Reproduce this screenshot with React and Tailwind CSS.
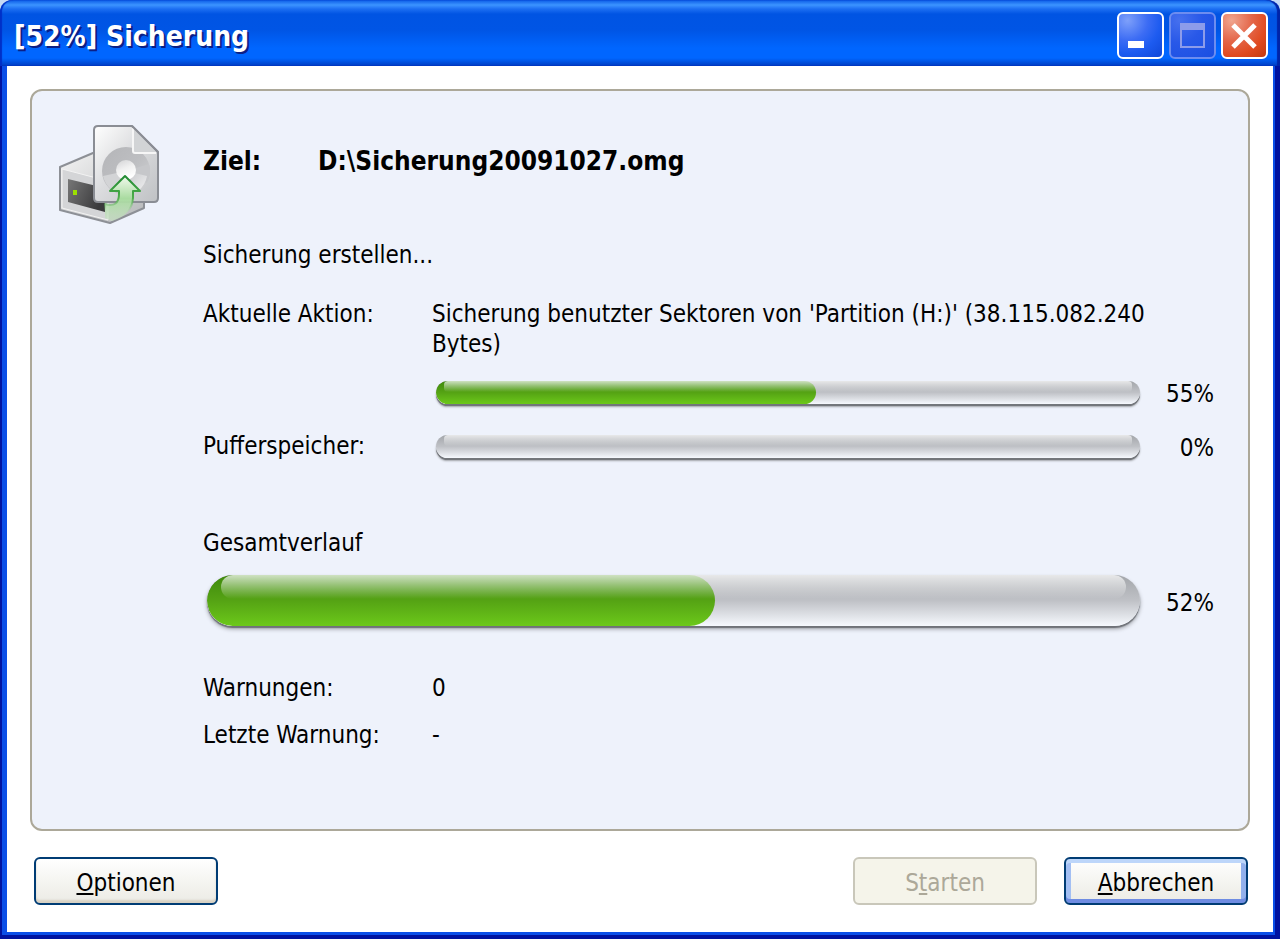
import React from 'react';
import clsx from 'clsx';

const action = {
    label: 'Aktuelle Aktion:',
    text: "Sicherung benutzter Sektoren von 'Partition (H:)' (38.115.082.240 Bytes)",
};

function BackupIcon() {
    return (
        <svg viewBox="18 13 103 103" className="w-[103px] h-[103px]" aria-hidden="true">
            <defs>
                <linearGradient id="drive" x1="0" y1="0" x2="1" y2="1">
                    <stop offset="0" stopColor="#f4f4f4" />
                    <stop offset="1" stopColor="#b4b6b8" />
                </linearGradient>
                <linearGradient id="page" x1="0" y1="0" x2="1" y2="1">
                    <stop offset="0" stopColor="#ffffff" />
                    <stop offset="0.45" stopColor="#dcdddf" />
                    <stop offset="1" stopColor="#bfc1c4" />
                </linearGradient>
                <linearGradient id="disc" x1="0" y1="0" x2="1" y2="1">
                    <stop offset="0" stopColor="#b4b5b8" />
                    <stop offset="0.5" stopColor="#bdbec1" />
                    <stop offset="1" stopColor="#d2d3d5" />
                </linearGradient>
                <linearGradient id="shine" x1="0" y1="0" x2="1" y2="1">
                    <stop offset="0" stopColor="#c4c5c8" />
                    <stop offset="1" stopColor="#f0f0f1" />
                </linearGradient>
                <linearGradient id="hub" x1="0" y1="0" x2="0.4" y2="1">
                    <stop offset="0" stopColor="#d2d3d5" />
                    <stop offset="0.5" stopColor="#f0f0f0" />
                    <stop offset="1" stopColor="#ffffff" />
                </linearGradient>
                <linearGradient id="bay" x1="0" y1="0" x2="1" y2="0.4">
                    <stop offset="0" stopColor="#777777" />
                    <stop offset="1" stopColor="#3a3a3c" />
                </linearGradient>
                <linearGradient id="arrow" x1="0" y1="0" x2="0" y2="1">
                    <stop offset="0" stopColor="#f2faee" />
                    <stop offset="0.5" stopColor="#a9dba0" />
                    <stop offset="1" stopColor="#c5e2c0" stopOpacity="0.6" />
                </linearGradient>
                <linearGradient id="arrowEdge" x1="0" y1="0" x2="0" y2="1">
                    <stop offset="0" stopColor="#218a32" />
                    <stop offset="0.5" stopColor="#4fae4c" />
                    <stop offset="0.8" stopColor="#8cc488" stopOpacity="0" />
                </linearGradient>
            </defs>
            {/* drive */}
            <path d="M20 57L53 43L104 70V98L70 113L20 100Z" fill="url(#drive)" stroke="#8d9096" strokeWidth="2" strokeLinejoin="round" />
            <path d="M22 59L68 71V110L22 98Z" fill="#d4d5d7" stroke="#f3f3f3" strokeWidth="1" />
            <path d="M28 69L65 78V102L28 92Z" fill="url(#bay)" />
            <rect x="33" y="80" width="4" height="5" fill="#9be000" />
            {/* page with disc */}
            <path d="M58 16H92L118 42V88Q118 92 114 92H58Q54 92 54 88V20Q54 16 58 16Z" fill="url(#page)" stroke="#8a8d94" strokeWidth="2" />
            <circle cx="86" cy="61" r="24" fill="url(#disc)" />
            <path d="M86 61L109 54A24 24 0 0 1 107 73Z" fill="#c6c7ca" />
            <path d="M86 61L107 66A24 24 0 0 1 98 81Z" fill="url(#shine)" />
            <path d="M86 61L63 66A24 24 0 0 0 72 80Z" fill="#d3d4d6" />
            <circle cx="86" cy="60" r="10" fill="url(#hub)" />
            <path d="M93 17V41Q93 43 95 43H117Z" fill="#d2d4d6" />
            <path d="M93 18V41Q93 43 95 43H116" fill="none" stroke="#f6f6f6" strokeWidth="2" />
            <path d="M92 16L118 42" stroke="#8a8d94" strokeWidth="2" />
            {/* arrow */}
            <path d="M85 66L100 81H93V88Q92 105 72 111L65 108V94Q79 98 79 84V81H70Z" fill="url(#arrow)" stroke="url(#arrowEdge)" strokeWidth="2" strokeLinejoin="round" />
        </svg>
    );
}

function ProgressBar({ label, value, fill, large }) {
    return (
        <div
            role="progressbar"
            aria-label={label}
            aria-valuenow={value}
            aria-valuemin={0}
            aria-valuemax={100}
            className={clsx(
                'relative flex-1 overflow-hidden rounded-full bg-linear-to-b from-[#a3a6aa] via-[#bfc1c6] to-[#f6f9fe]',
                large ? 'h-[51px]' : 'h-[23px]'
            )}
        >
            <div
                className="h-full rounded-full bg-linear-to-b from-[#3f8a0c] via-[#55a314] to-[#6cc91a]"
                style={{ width: `${fill}%` }}
            />
            {/* gloss */}
            <div
                className={clsx(
                    'absolute top-0 bg-linear-to-b from-white/75 to-white/0',
                    large ? 'inset-x-[14px] h-[24px] rounded-xl' : 'inset-x-[8px] h-[11px] rounded-sm'
                )}
            />
        </div>
    );
}

function BarRow({ label, value, fill, large }) {
    return (
        <div className="flex items-center">
            <div
                className={clsx(
                    'flex flex-1 rounded-full',
                    large
                        ? 'shadow-[0_2px_1px_#6f7278,0_3px_4px_#9a9da3]'
                        : 'shadow-[0_2px_0_#73767b,0_3px_2px_#a0a3a8]'
                )}
            >
                <ProgressBar label={label} value={value} fill={fill} large={large} />
            </div>
            <span className="w-[74px] pt-1 text-right">{value}%</span>
        </div>
    );
}

function DialogButton({ hotkey, before = '', after, primary, disabled }) {
    return (
        <button
            type="button"
            disabled={disabled}
            className={clsx(
                'h-12 w-[184px] rounded-md border-2 pt-1 leading-[30px]',
                disabled && 'border-[#c9c7ba] bg-[#f5f4ea] text-[#aca899]',
                !disabled && 'border-[#003c74] bg-linear-to-b from-white via-[#f5f5f1] to-[#ecebe5] text-black',
                !disabled && !primary && 'shadow-[inset_0_-3px_2px_#d8d2c4]',
                primary && 'shadow-[inset_0_4px_0_#bdd6fa,inset_0_-4px_0_#6f8ce2,inset_5px_0_0_#a3bff3,inset_-5px_0_0_#92b0ec]'
            )}
        >
            {before}
            <span className="underline decoration-2 underline-offset-2">{hotkey}</span>
            {after}
        </button>
    );
}

function TitleButton({ label, className, children }) {
    return (
        <button
            type="button"
            aria-label={label}
            className={clsx('h-[47px] w-[47px] rounded-md border-2', className)}
        >
            <svg viewBox="0 0 43 43" className="h-full w-full" fill="none">{children}</svg>
        </button>
    );
}

function TitleBar() {
    return (
        <header className="flex h-[66px] items-center justify-between rounded-t-xl bg-[linear-gradient(to_bottom,#0a5be6_0px,#3c94ff_5px,#1c6ef2_9px,#0054e3_14px,#0055e5_30px,#0066ff_48px,#0066ff_58px,#0047d0_64px,#003ac0_66px)] pt-1 pr-3 pl-[14px] shadow-[inset_2px_0_1px_#0030c8,inset_-3px_0_1px_#0024a8]">
            <h1 className="pt-1 font-['DejaVu_Sans_Condensed','DejaVu_Sans',sans-serif] text-[28px] font-bold text-white [text-shadow:2px_2px_0_#0b1f86]">
                [52%] Sicherung
            </h1>
            <div className="flex gap-[5px]">
                <TitleButton
                    label="Minimieren"
                    className="border-white bg-[radial-gradient(circle_at_20%_15%,#7ea0fa_0%,#3c6cf4_40%,#1d5bf0_65%,#0f47d8_100%)]"
                >
                    <rect x="9" y="27" width="16" height="7" fill="#fff" />
                </TitleButton>
                <TitleButton
                    label="Maximieren"
                    className="border-[#6d8df0] bg-[radial-gradient(circle_at_20%_15%,#4670ee_0%,#2858e8_45%,#1a4fe2_100%)]"
                >
                    <rect x="10" y="10" width="23" height="23" stroke="#8d9cea" strokeWidth="2" />
                    <rect x="9" y="9" width="25" height="7" fill="#8d9cea" />
                </TitleButton>
                <TitleButton
                    label="Schließen"
                    className="border-white bg-[radial-gradient(circle_at_20%_15%,#f0a58f_0%,#e4674a_40%,#e04a20_70%,#c23a10_100%)]"
                >
                    <path d="M10 11L32 33M32 11L10 33" stroke="#fff" strokeWidth="5" />
                </TitleButton>
            </div>
        </header>
    );
}

export default function App() {
    return (
        <div className="flex min-h-screen flex-col bg-[#c6daf5] font-['DejaVu_Sans_Condensed','DejaVu_Sans',sans-serif] text-2xl leading-[30px] text-black">
            <TitleBar />
            <div className="flex flex-1 bg-[#0a4fe8] px-[7px] pb-[7px] shadow-[inset_2px_-4px_0_#0014a0,inset_-5px_0_0_#0012a0]">
                <main className="flex flex-1 flex-col bg-white px-[23px] pt-[23px] pb-[27px]">
                    <section className="flex flex-1 items-start rounded-xl border-2 border-[#aca899] bg-[#eef2fb] pr-[34px] pl-[26px]">
                        <div className="mt-[32px] w-[145px] shrink-0">
                            <BackupIcon />
                        </div>
                        <div className="min-w-0 flex-1 pt-[55px] pb-[60px]">
                            <div className="flex text-[26px] leading-[30px] font-bold">
                                <span className="w-[115px]">Ziel:</span>
                                <span>D:\Sicherung20091027.omg</span>
                            </div>
                            <p className="mt-16">Sicherung erstellen...</p>

                            <div className="mt-[29px] grid grid-cols-[229px_1fr]">
                                <span>{action.label}</span>
                                <span className="pr-12">{action.text}</span>
                                <span />
                                <div className="mt-4 pl-1">
                                    <BarRow label={action.label} value={55} fill={54} />
                                </div>
                                <span className="mt-[22px]">Pufferspeicher:</span>
                                <div className="mt-5 pl-1">
                                    <BarRow label="Pufferspeicher" value={0} fill={0} />
                                </div>
                            </div>

                            <p className="mt-[65px]">Gesamtverlauf</p>
                            <div className="mt-[17px] pl-1">
                                <BarRow label="Gesamtverlauf" value={52} fill={54.5} large />
                            </div>

                            <dl className="mt-[47px] grid grid-cols-[229px_1fr] gap-y-[17px]">
                                <dt>Warnungen:</dt>
                                <dd>0</dd>
                                <dt>Letzte Warnung:</dt>
                                <dd>-</dd>
                            </dl>
                        </div>
                    </section>

                    <footer className="mt-[26px] flex items-center pr-[2px] pl-1">
                        <DialogButton hotkey="O" after="ptionen" />
                        <div className="ml-auto flex gap-[27px]">
                            <DialogButton before="S" hotkey="t" after="arten" disabled />
                            <DialogButton hotkey="A" after="bbrechen" primary />
                        </div>
                    </footer>
                </main>
            </div>
        </div>
    );
}
